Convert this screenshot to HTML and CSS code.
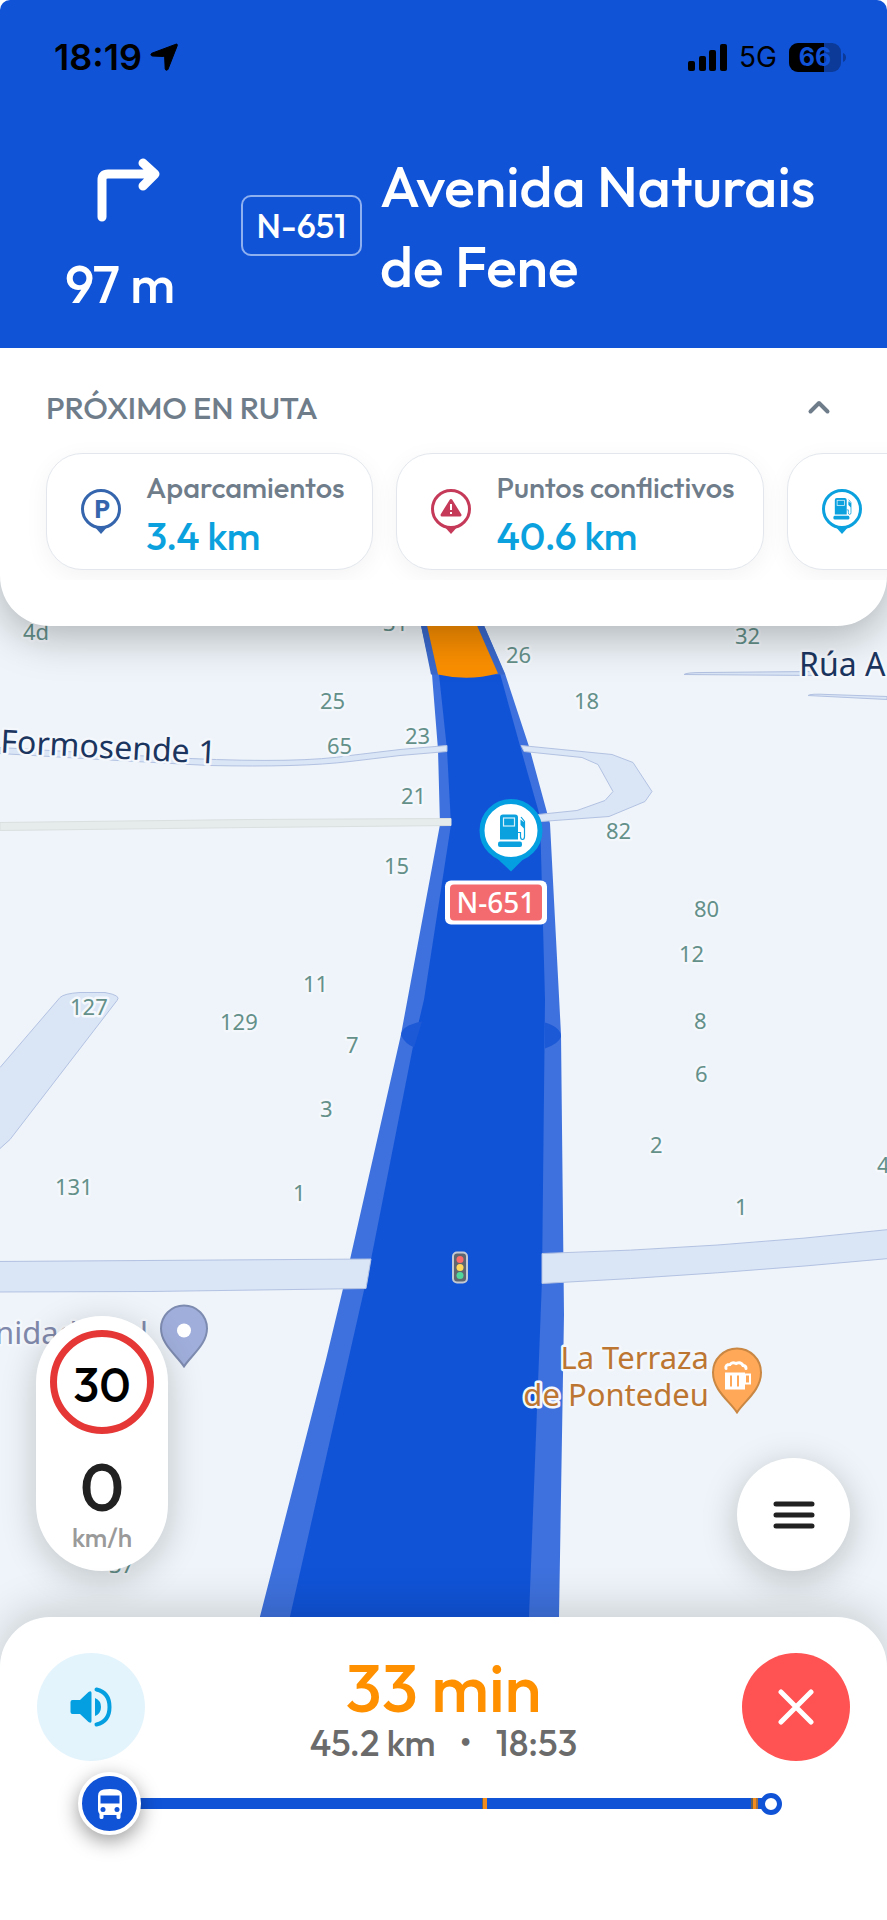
FILE: index.html
```html
<!DOCTYPE html>
<html lang="es">
<head>
  <meta charset="UTF-8" />
  <meta name="viewport" content="width=device-width, initial-scale=1.0" />
  <title>Navegación</title>
  <link rel="stylesheet" href="styles.css">
</head>
<body>
  <div class="app">
    <header class="guidance">
      <div class="status-bar">
        <div class="status-time">
          <span>18:19</span>
          <svg width="28" height="28" viewBox="0 0 28 28"><path d="M26 1.200c.9-.4 1.700.4 1.300 1.300L18 26.300c-.6 1.400-2.700 1.100-2.800-.4L14.700 15c0-.9-.6-1.500-1.500-1.500L2.300 13C.8 12.900.4 11 1.700 10.300z" stroke="#000" stroke-linejoin="round"/></svg>
        </div>
        <div class="status-icons">
          <svg width="39" height="27" viewBox="0 0 39 27"><rect x="0" y="17" width="7" height="10" rx="2"/><rect x="11" y="12" width="7" height="15" rx="2"/><rect x="21" y="6" width="7" height="21" rx="2"/><rect x="32" y="0" width="7" height="27" rx="2"/></svg>
          <span>5G</span>
          <svg width="58" height="29" viewBox="0 0 58 29">
            <rect width="52" height="29" rx="9" fill="#0b3a98"/>
            <path d="M9 0h26v29H9a9 9 0 0 1-9-9V9a9 9 0 0 1 9-9z"/>
            <path d="M54 10c4 1 4 8 0 9z" fill="#0b3a98"/>
            <text class="battery-text" x="26" y="23" text-anchor="middle">66</text>
          </svg>
        </div>
      </div>
      <div class="instruction">
        <div class="maneuver">
          <svg class="arrow" width="64" height="64" viewBox="0 0 64 64" fill="none" stroke="#fff" stroke-width="9" stroke-linecap="round" stroke-linejoin="round"><path d="M6 59V22q0-6 6-6h45M47 5l12 11-12 12"/></svg>
          <span>97 m</span>
        </div>
        <span class="road-ref">N-651</span>
        <h1 class="road-name">Avenida Naturais de Fene</h1>
      </div>
    </header>

    <section class="upcoming">
      <div class="upcoming-head">
        <h2>PRÓXIMO EN RUTA</h2>
        <button class="collapse" aria-label="Contraer">
          <svg width="24" height="16" viewBox="0 0 24 16" fill="none" stroke="#6f7d8b" stroke-width="4" stroke-linecap="round" stroke-linejoin="round"><path d="M3.500 12.500 12 4l8.500 8.500"/></svg>
        </button>
      </div>
      <ul class="chips">
        <li class="chip">
          <svg width="42" height="48" viewBox="0 0 42 48"><path d="M13 37h16l-8 9z" fill="#3565ad"/><circle cx="21" cy="21" r="18.500" fill="#fff" stroke="#3565ad" stroke-width="3"/><text class="pin-letter" x="22" y="30" text-anchor="middle">P</text></svg>
          <div class="chip-text"><span>Aparcamientos</span><strong>3.4 km</strong></div>
        </li>
        <li class="chip">
          <svg width="42" height="48" viewBox="0 0 42 48"><path d="M13 37h16l-8 9z" fill="#c63a59"/><circle cx="21" cy="21" r="18.500" fill="#fff" stroke="#c63a59" stroke-width="3"/><path d="M21 12.500 30 27H12z" fill="#c63a59" stroke="#c63a59" stroke-width="3" stroke-linejoin="round"/><path d="M21 16v6M21 24v2" stroke="#fff" stroke-width="2"/></svg>
          <div class="chip-text"><span>Puntos conflictivos</span><strong>40.6 km</strong></div>
        </li>
        <li class="chip">
          <svg width="42" height="48" viewBox="0 0 42 48"><path d="M13 37h16l-8 9z" fill="#0aa1de"/><circle cx="21" cy="21" r="18.500" fill="#fff" stroke="#0aa1de" stroke-width="3"/><use href="#fuel" transform="translate(12.500 10) scale(.66)"/></svg>
        </li>
      </ul>
    </section>

    <main class="map">
      <svg class="map-canvas" viewBox="0 576 887 1092" preserveAspectRatio="xMidYMid slice">
        <defs>
          <g id="fuel" fill="#0aa1de">
            <path d="M5 0h12q3 0 3 3v22H2V3q0-3 3-3z"/>
            <rect x="5.500" y="3.500" width="11" height="8" fill="none" stroke="#d8f0fa" stroke-width="1.200"/>
            <rect x="0" y="27" width="24" height="5.500" rx="2"/>
            <path d="M23 2.500l3.500 4.500v15q0 3-2 3t-2-3v-4H20" fill="none" stroke="#0aa1de" stroke-width="1.200"/>
            <path d="M22.500 5l4 3v6.500l-4-4z"/>
          </g>
        </defs>

        <!-- secondary roads -->
        <g class="side-road">
          <path d="M0 1068 60 998q4-4 20-5h25q17 3 12 8L10 1140l-10 9"/>
          <path d="M684 675q2-2 20-2l110-1v4z"/>
          <path d="M808 696q2-2 20-1l59 2v3z"/>
        </g>

        <!-- route -->
        <path class="route-casing" d="M421 626 432 675 438 750 440 825 401 1035 350 1260 326 1360 260 1617 248 1668H559L559 1617 564 1315 561 1035 550 824 529 747 505 674 484 626 460 576H412z"/>
        <path class="route" d="M427 620 439 675 447 750 451 825 424 1000 413 1047 371 1260 290 1617 278 1668H528L529 1617 542 1280 545 1000 540 817 521 750 500 674 477 626z"/>
        <path class="route-slow-casing" d="M421 626 431 675H505L484 626 460 576H412z"/>
        <path class="route-slow" d="M415 576 427 626 438 675Q468 682 498 674L477 626 455 576z"/>
        <path class="route-joint" d="M422 1022q-21 4-21 14 4 8 13 12zM545 1023q16 5 16 14-2 7-16 12z"/>

        <!-- crossings drawn above the casing -->
        <path class="side-road" d="M0 748 100 754 190 759Q300 764 350 756L400 750 447 746V752L400 756 350 762Q300 768 210 766L190 765 100 760 0 754z"/>
        <path class="track" d="M0 823 250 820 451 819V826L250 828 0 831z"/>
        <path class="side-road" d="M521 746 612 755 633 763 652 792 645 802 609 817 541 822 538 815 577 811 605 801 613 792 598 765 582 758 524 752z"/>
        <path class="side-road" d="M-2 1262 371 1259.500 366 1289 150 1292-2 1292.500z"/>
        <path class="side-road" d="M542 1254Q720 1249 889 1230V1259Q720 1275 542 1284z"/>

        <g class="house">
          <text x="23" y="640">4d</text><text x="383" y="631">31</text>
          <text x="735" y="644">32</text><text x="506" y="663">26</text>
          <text x="320" y="709">25</text><text x="574" y="709">18</text>
          <text x="327" y="754">65</text><text x="405" y="744">23</text>
          <text x="401" y="804">21</text><text x="606" y="839">82</text>
          <text x="384" y="874">15</text><text x="694" y="917">80</text>
          <text x="679" y="962">12</text><text x="303" y="992">11</text>
          <text x="70" y="1015">127</text><text x="220" y="1030">129</text>
          <text x="694" y="1029">8</text><text x="346" y="1053">7</text>
          <text x="695" y="1082">6</text><text x="320" y="1117">3</text>
          <text x="650" y="1153">2</text><text x="877" y="1173">4</text>
          <text x="55" y="1195">131</text><text x="293" y="1201">1</text>
          <text x="735" y="1215">1</text><text x="109" y="1573">37</text>
        </g>

        <text class="street" x="0" y="753" transform="rotate(3 0 753)">Formosende 1</text>
        <text class="street" x="799" y="676">Rúa A</text>

        <!-- fuel station -->
        <path d="M495 857h31l-15 15z" fill="#049fe0"/>
        <circle cx="511" cy="831" r="29" fill="#fff" stroke="#049fe0" stroke-width="5"/>
        <use href="#fuel" transform="translate(498 815)"/>

        <!-- road shield -->
        <rect x="445" y="881" width="102" height="44" rx="6" fill="#fff"/>
        <rect x="450" y="885" width="92" height="36" rx="4" fill="#f36b6f"/>
        <text class="shield" x="496" y="913" text-anchor="middle">N-651</text>

        <!-- traffic light -->
        <rect x="453" y="1253" width="14" height="30" rx="4" fill="#5f6670" stroke="#c5cad2" stroke-width="2"/>
        <circle cx="460" cy="1260" r="3.500" fill="#fb6b6b"/><circle cx="460" cy="1268" r="3.500" fill="#ffd85c"/><circle cx="460" cy="1276" r="3.500" fill="#50d89c"/>

        <!-- places -->
        <text class="place place-public" x="-5" y="1344">nidad</text>
        <text class="place place-public" x="140" y="1344">l</text>
        <path d="M184 1367C177 1356 161 1345 161 1329a23 23 0 0 1 46 0C207 1345 191 1356 184 1367z" fill="#a0aedb" stroke="#7e8bb0" stroke-width="2"/>
        <circle cx="184" cy="1331" r="7" fill="#fff"/>

        <text class="place place-bar" x="709" y="1369" text-anchor="end">La Terraza</text>
        <text class="place place-bar" x="709" y="1406" text-anchor="end">de Pontedeu</text>
        <path d="M737 1413C730 1402 713 1391 713 1373a24 24 0 0 1 48 0C761 1391 744 1402 737 1413z" fill="#ffa858" stroke="#c98743" stroke-width="2"/>
        <path d="M726 1369q-1-4 4-4 2-3 6-1 5-2 7 2 3 0 3 3" fill="none" stroke="#fff" stroke-width="3" stroke-linecap="round"/>
        <path fill="#fff" fill-rule="evenodd" d="M725 1373h20v1h6v11h-6v5h-20zM730 1376v11h2v-11zM737 1376v11h2v-11zM746 1376v7h3v-7z"/>
      </svg>

      <div class="map-controls">
        <div class="speed">
          <div class="speed-limit">30</div>
          <div class="speed-value">0</div>
          <div class="speed-unit">km/h</div>
        </div>
        <button class="menu" aria-label="Menú">
          <svg width="42" height="30" viewBox="0 0 42 30" stroke="#212121" stroke-width="5" stroke-linecap="round"><path d="M3 4h36M3 15h36M3 26h36"/></svg>
        </button>
      </div>
    </main>

    <footer class="trip">
      <div class="trip-row">
        <button class="round sound" aria-label="Sonido">
          <svg width="42" height="40" viewBox="0 0 42 40" fill="#049fe0"><path d="M2.500 13H10l8.500-8q3-2 3 1v28q0 3-3 1L10 27H2.500Q.5 27 .5 25V15q0-2 2-2zM25 11q6 2.500 6 9t-6 9z"/><path d="M26.500 2.500q13 3 13 17.500t-13 17.500" fill="none" stroke="#049fe0" stroke-width="4" stroke-linecap="round"/></svg>
        </button>
        <div class="eta">
          <div class="eta-time">33 min</div>
          <div class="eta-detail"><span>45.2 km</span><span>•</span><span>18:53</span></div>
        </div>
        <button class="round close" aria-label="Cerrar">
          <svg width="36" height="36" viewBox="0 0 36 36" stroke="#fff" stroke-width="5" stroke-linecap="round"><path d="M3 3l30 30M33 3 3 33"/></svg>
        </button>
      </div>
      <div class="progress">
        <div class="bus">
          <svg width="26" height="30" viewBox="0 0 26 30"><path fill="#fff" fill-rule="evenodd" d="M3 2q2-2 10-2t10 2q2 1.500 2 5v14q0 2-1.500 4v3.500q0 1.500-2 1.500t-2-1.500V26h-13v2.500q0 1.500-2 1.500t-2-1.500V25Q1 23 1 21V7q0-3.500 2-5zM3.500 6.500v8h19v-8z"/><circle cx="6" cy="20.500" r="2.500" fill="#1053d7"/><circle cx="20" cy="20.500" r="2.500" fill="#1053d7"/></svg>
        </div>
        <div class="track-line"><i class="jam" style="left: 55%"></i><i class="jam jam-end" style="left: 98%"></i></div>
        <div class="destination"></div>
      </div>
    </footer>
  </div>
</body>
</html>
```
FILE: styles.css
```css
* {
  box-sizing: border-box;
}

body {
  margin: 0;
  background: #fff;
  font-family: 'Outfit', 'Lato', sans-serif;
  font-weight: 500;
}

button {
  border: none;
  padding: 0;
  cursor: pointer;
  display: flex;
  align-items: center;
  justify-content: center;
}

svg {
  display: block;
  flex-shrink: 0;
}

.app {
  display: flex;
  flex-direction: column;
  min-height: 100vh;
  overflow: hidden;
}

/* Guidance header */
.guidance {
  position: relative;
  z-index: 3;
  background: #1053d7;
  border-radius: 10px 10px 0 0;
  color: #fff;
  padding: 36px 40px 32px 54px;
}

.status-bar {
  display: flex;
  justify-content: space-between;
  align-items: center;
  height: 42px;
  color: #000;
  font-family: 'Inter', sans-serif;
}

.status-time {
  display: flex;
  align-items: center;
  gap: 8px;
  font-size: 36px;
  font-weight: 600;
}

.status-icons {
  display: flex;
  align-items: center;
  gap: 12px;
  font-size: 28px;
  font-weight: 400;
}

.battery-text {
  font-size: 25px;
  font-weight: 700;
  fill: #1053d7;
}

.instruction {
  display: flex;
  align-items: flex-start;
  margin-top: 68px;
}

.maneuver {
  width: 132px;
  flex-shrink: 0;
  display: flex;
  flex-direction: column;
  align-items: center;
  gap: 30px;
  margin-top: 12px;
  font-size: 52px;
  line-height: 64px;
  white-space: nowrap;
}

.arrow {
  margin-left: 16px;
}

.road-ref {
  margin: 49px 0 0 55px;
  border: 2px solid #8fb0f0;
  border-radius: 10px;
  width: 121px;
  height: 61px;
  line-height: 58px;
  text-align: center;
  font-size: 34px;
  flex-shrink: 0;
}

.road-name {
  margin: 0 0 0 18px;
  font-size: 57px;
  line-height: 80px;
  font-weight: 500;
}

/* Upcoming points */
.upcoming {
  position: relative;
  z-index: 2;
  background: #fff;
  border-radius: 0 0 50px 50px;
  box-shadow: 0 10px 44px rgba(0, 0, 0, 0.28);
  padding: 34px 0 46px;
  margin-bottom: -50px;
}

.upcoming-head {
  display: flex;
  justify-content: space-between;
  align-items: center;
  height: 50px;
  padding: 0 56px 0 46px;
}

.upcoming-head h2 {
  margin: 0;
  font-size: 31px;
  font-weight: 500;
  color: #6f7d8b;
}

.collapse {
  background: none;
}

.chips {
  list-style: none;
  margin: 0;
  padding: 21px 0 10px 46px;
  display: flex;
  gap: 23px;
  overflow: hidden;
}

.chip {
  display: flex;
  align-items: center;
  gap: 24px;
  flex-shrink: 0;
  min-width: 300px;
  height: 117px;
  padding: 0 28px 0 33px;
  background: #fff;
  border: 1px solid #e3e7ed;
  border-radius: 36px;
  box-shadow: 0 6px 24px rgba(0, 0, 0, 0.05);
}

.chip-text {
  display: flex;
  flex-direction: column;
  font-size: 29px;
  line-height: 48px;
  color: #6f7d8b;
}

.chip-text strong {
  font-size: 39px;
  font-weight: 500;
  color: #0aa1de;
}

.pin-letter {
  font-size: 25px;
  font-weight: 700;
  fill: #3565ad;
}

/* Map */
.map {
  position: relative;
  flex: 1;
  min-height: 600px;
  display: flex;
  align-items: flex-end;
  background: #eef4f9;
}

.map-canvas {
  position: absolute;
  inset: 0;
  width: 100%;
  height: 100%;
  font-family: 'Noto Sans', sans-serif;
}

.side-road {
  fill: #dae5f6;
  stroke: #b3c2e2;
  stroke-width: 1px;
}

.track {
  fill: #e6ebeb;
  stroke: #dadfdf;
  stroke-width: 1px;
}

.route-casing {
  fill: #3e71dd;
}

.route {
  fill: #1053d7;
}

.route-slow-casing {
  fill: #3a69cc;
}

.route-slow {
  fill: #fb8f00;
}

.route-joint {
  fill: #1c59d6;
}

.map-canvas text {
  paint-order: stroke;
  stroke: #f4f8fc;
  stroke-width: 5px;
  stroke-linejoin: round;
}

.map-canvas .shield {
  fill: #fff;
  stroke: none;
  font-size: 28px;
  font-weight: 500;
}

.house {
  font-size: 22px;
  font-weight: 400;
  fill: #64908a;
}

.street {
  font-size: 32px;
  font-weight: 400;
  fill: #1b355f;
}

.place {
  font-size: 31px;
  font-weight: 400;
}

.place-public {
  fill: #8089ab;
}

.place-bar {
  fill: #bd7632;
}

.map-controls {
  position: relative;
  flex: 1;
  display: flex;
  justify-content: space-between;
  align-items: flex-end;
  padding: 0 37px 96px 36px;
}

.speed {
  display: flex;
  flex-direction: column;
  align-items: center;
  width: 132px;
  height: 255px;
  padding-top: 14px;
  background: #fff;
  border-radius: 66px;
  box-shadow: 0 8px 36px rgba(0, 0, 0, 0.2);
}

.speed-limit {
  width: 104px;
  height: 104px;
  border: 7px solid #e53836;
  border-radius: 50%;
  font-size: 48px;
  font-weight: 500;
  line-height: 94px;
  text-align: center;
  color: #000;
}

.speed-value {
  font-size: 68px;
  font-weight: 500;
  line-height: 80px;
  margin-top: 12px;
  color: #212121;
}

.speed-unit {
  font-size: 26px;
  line-height: 24px;
  color: #9a9a9a;
}

.menu {
  width: 113px;
  height: 113px;
  border-radius: 50%;
  background: #fff;
  box-shadow: 0 8px 36px rgba(0, 0, 0, 0.22);
}

/* Trip summary */
.trip {
  position: relative;
  z-index: 2;
  background: #fff;
  border-radius: 50px 50px 0 0;
  box-shadow: 0 -8px 44px rgba(0, 0, 0, 0.16);
  margin-top: -50px;
  padding: 36px 37px 85px;
}

.trip-row {
  display: flex;
  justify-content: space-between;
}

.round {
  width: 108px;
  height: 108px;
  border-radius: 50%;
}

.sound {
  background: #e4f4fc;
}

.close {
  background: #ff5252;
}

.eta {
  text-align: center;
}

.eta-time {
  font-size: 67px;
  font-weight: 500;
  line-height: 68px;
  color: #ff9100;
}

.eta-detail {
  display: flex;
  justify-content: center;
  gap: 24px;
  font-size: 36px;
  line-height: 44px;
  margin-bottom: -4px;
  color: #6b6b6b;
}

.progress {
  display: flex;
  align-items: center;
  margin: 11px 68px 0 41px;
}

.bus {
  width: 63px;
  height: 63px;
  border: 4px solid #fff;
  border-radius: 50%;
  background: #1053d7;
  box-shadow: 0 6px 20px rgba(0, 0, 0, 0.4);
  display: flex;
  align-items: center;
  justify-content: center;
  z-index: 1;
}

.track-line {
  position: relative;
  flex: 1;
  height: 11px;
  margin: 0 -4px;
  background: #1053d7;
}

.jam {
  position: absolute;
  top: 0;
  bottom: 0;
  width: 5px;
  background: #f28c1c;
  border-left: 1px solid #6b6350;
}

.jam-end {
  width: 7px;
  border-right: 2px solid #a8713c;
  border-left: 2px solid #6b6350;
}

.destination {
  width: 22px;
  height: 22px;
  border: 5px solid #1053d7;
  border-radius: 50%;
  background: #fff;
  z-index: 1;
}
```
